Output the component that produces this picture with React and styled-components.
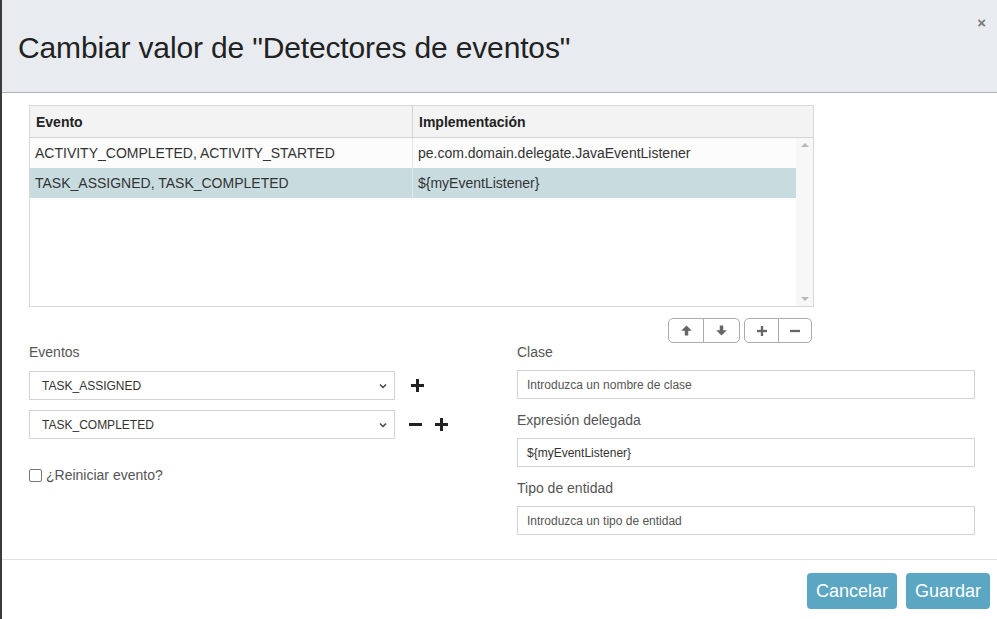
import React from "react";
import styled, { createGlobalStyle } from "styled-components";

const GlobalStyle = createGlobalStyle`
  html, body {
    margin: 0;
    padding: 0;
    background: #3b3b3b;
    font-family: "Liberation Sans", Arial, sans-serif;
  }
  * { box-sizing: border-box; }
`;

const Modal = styled.div`
  margin-left: 2px;
  height: 619px;
  background: #fff;
  display: flex;
  flex-direction: column;
  overflow: hidden;
`;

const Header = styled.div`
  height: 93px;
  background: #e8ecf0;
  border-bottom: 1px solid #a9b1bd;
  display: flex;
  align-items: center;
  justify-content: space-between;
  padding: 0 12px 0 16px;
  position: relative;
`;

const Title = styled.h1`
  margin: 0;
  font-weight: normal;
  font-size: 30px;
  color: #222;
  letter-spacing: -0.15px;
  padding-top: 4px;
`;

const Close = styled.span`
  position: absolute;
  right: 11px;
  top: 14px;
  font-size: 15px;
  font-weight: bold;
  color: #777;
`;

const Body = styled.div`
  padding: 12px 22px 0 27px;
  flex: 1;
`;

const Table = styled.div`
  width: 785px;
  border: 1px solid #d8d8d8;
  height: 202px;
  display: flex;
  flex-direction: column;
`;

const HeadRow = styled.div`
  display: grid;
  grid-template-columns: 382px 1fr;
  height: 32px;
  background: #f3f3f3;
  border-bottom: 1px solid #d4d4d4;
`;

const HeadCell = styled.div`
  font-weight: bold;
  font-size: 14px;
  color: #222;
  padding: 0 6px;
  display: flex;
  align-items: center;
  border-left: ${(p) => (p.$first ? "none" : "1px solid #d4d4d4")};
`;

const TableBody = styled.div`
  flex: 1;
  display: flex;
`;

const Rows = styled.div`
  flex: 1;
`;

const Row = styled.div`
  display: grid;
  grid-template-columns: 382px 1fr;
  height: 30px;
  background: ${(p) => (p.$selected ? "#c8dce0" : "#fcfcfc")};
`;

const Cell = styled.div`
  font-size: 14px;
  color: #333;
  padding: 0 5px;
  display: flex;
  align-items: center;
  border-left: ${(p) => (p.$first ? "none" : "1px solid #e6e6e6")};
`;

const Scrollbar = styled.div`
  width: 17px;
  background: #f7f7f7;
  display: flex;
  flex-direction: column;
  justify-content: space-between;
  align-items: center;
  padding: 5px 0;
`;

const Arrow = styled.div`
  width: 0;
  height: 0;
  border-left: 4px solid transparent;
  border-right: 4px solid transparent;
  ${(p) =>
    p.$down
      ? "border-top: 4px solid #b8b8b8;"
      : "border-bottom: 4px solid #b8b8b8;"}
`;

const Toolbar = styled.div`
  width: 785px;
  display: flex;
  justify-content: flex-end;
  gap: 4px;
  margin-top: 11px;
  padding-right: 2px;
`;

const BtnGroup = styled.div`
  display: flex;
`;

const IconBtn = styled.button`
  width: ${(p) => p.$w || 35}px;
  height: 25px;
  background: #fff;
  border: 1px solid #aaa;
  border-radius: ${(p) => (p.$pos === "left" ? "5px 0 0 5px" : "0 5px 5px 0")};
  margin-left: ${(p) => (p.$pos === "right" ? "-1px" : "0")};
  display: flex;
  align-items: center;
  justify-content: center;
  padding: 0;
  color: #666;
`;

const Columns = styled.div`
  display: grid;
  grid-template-columns: 488px 458px;
  margin-top: 1px;
`;

const Col = styled.div`
  display: flex;
  flex-direction: column;
`;

const Label = styled.div`
  font-size: 14px;
  color: #555;
  height: 17px;
`;

const SelectRow = styled.div`
  display: flex;
  align-items: center;
  margin-top: ${(p) => p.$mt}px;
`;

const Select = styled.div`
  width: 366px;
  height: 29px;
  border: 1px solid #d3d3d3;
  display: flex;
  align-items: center;
  justify-content: space-between;
  padding: 0 6px 0 12px;
  font-size: 12px;
  color: #333;
`;

const Actions = styled.div`
  display: flex;
  gap: 13px;
  margin-left: ${(p) => p.$ml}px;
`;

const CheckRow = styled.label`
  display: flex;
  align-items: center;
  gap: 4px;
  font-size: 14px;
  color: #555;
  margin-top: 28px;
`;

const Box = styled.span`
  width: 13px;
  height: 13px;
  border: 1px solid #767676;
  border-radius: 2px;
  display: inline-block;
`;

const Input = styled.div`
  width: 458px;
  height: 29px;
  border: 1px solid #d3d3d3;
  display: flex;
  align-items: center;
  padding: 0 9px;
  font-size: 12px;
  color: ${(p) => (p.$value ? "#333" : "#555")};
  margin-top: 9px;
  margin-bottom: ${(p) => p.$mb || 0}px;
`;

const Footer = styled.div`
  height: 60px;
  border-top: 1px solid #e2e2e2;
  display: flex;
  justify-content: flex-end;
  align-items: flex-start;
  gap: 9px;
  padding: 13px 7px 0 0;
`;

const Button = styled.button`
  height: 36px;
  padding: 0 9px;
  background: #5aa6c3;
  color: #fff;
  border: none;
  border-radius: 4px;
  font-size: 18px;
  font-family: "Liberation Sans", Arial, sans-serif;
`;

const Chevron = () => (
  <svg width="10" height="10" viewBox="0 0 10 10">
    <path d="M2 3.5 L5 6.5 L8 3.5" stroke="#444" strokeWidth="1.5" fill="none" />
  </svg>
);

const Plus = ({ size = 13, color = "#222", w = 3 }) => (
  <svg width={size} height={size} viewBox="0 0 13 13">
    <rect x="0" y={(13 - w) / 2} width="13" height={w} fill={color} />
    <rect x={(13 - w) / 2} y="0" width={w} height="13" fill={color} />
  </svg>
);

const Minus = ({ size = 13, color = "#222", w = 3 }) => (
  <svg width={size} height={size} viewBox="0 0 13 13">
    <rect x="0" y={(13 - w) / 2} width="13" height={w} fill={color} />
  </svg>
);

const ArrowIcon = ({ down }) => (
  <svg width="11" height="11" viewBox="0 0 10 10">
    <g transform={down ? "rotate(180 5 5)" : undefined}>
      <path d="M5 0.5 L9.8 5.3 L6.6 5.3 L6.6 9.5 L3.4 9.5 L3.4 5.3 L0.2 5.3 Z" fill="#666" />
    </g>
  </svg>
);

const rows = [
  ["ACTIVITY_COMPLETED, ACTIVITY_STARTED", "pe.com.domain.delegate.JavaEventListener"],
  ["TASK_ASSIGNED, TASK_COMPLETED", "${myEventListener}"],
];

const App = () => {
  return (
    <>
      <GlobalStyle />
      <Modal>
        <Header>
          <Title>Cambiar valor de "Detectores de eventos"</Title>
          <Close>×</Close>
        </Header>
        <Body>
          <Table>
            <HeadRow>
              <HeadCell $first>Evento</HeadCell>
              <HeadCell>Implementación</HeadCell>
            </HeadRow>
            <TableBody>
              <Rows>
                {rows.map((r, i) => (
                  <Row key={i} $selected={i === 1}>
                    <Cell $first>{r[0]}</Cell>
                    <Cell>{r[1]}</Cell>
                  </Row>
                ))}
              </Rows>
              <Scrollbar>
                <Arrow />
                <Arrow $down />
              </Scrollbar>
            </TableBody>
          </Table>
          <Toolbar>
            <BtnGroup>
              <IconBtn $pos="left" $w={36}>
                <ArrowIcon />
              </IconBtn>
              <IconBtn $pos="right" $w={37}>
                <ArrowIcon down />
              </IconBtn>
            </BtnGroup>
            <BtnGroup>
              <IconBtn $pos="left" $w={35}>
                <Plus size={10} color="#666" />
              </IconBtn>
              <IconBtn $pos="right" $w={34}>
                <Minus size={10} color="#666" />
              </IconBtn>
            </BtnGroup>
          </Toolbar>
          <Columns>
            <Col>
              <Label>Eventos</Label>
              <SelectRow $mt={10}>
                <Select>
                  TASK_ASSIGNED
                  <Chevron />
                </Select>
                <Actions $ml={16}>
                  <Plus />
                </Actions>
              </SelectRow>
              <SelectRow $mt={10}>
                <Select>
                  TASK_COMPLETED
                  <Chevron />
                </Select>
                <Actions $ml={14}>
                  <Minus />
                  <Plus />
                </Actions>
              </SelectRow>
              <CheckRow>
                <Box />
                ¿Reiniciar evento?
              </CheckRow>
            </Col>
            <Col>
              <Label>Clase</Label>
              <Input $mb={13}>Introduzca un nombre de clase</Input>
              <Label>Expresión delegada</Label>
              <Input $value $mb={13}>${"{myEventListener}"}</Input>
              <Label>Tipo de entidad</Label>
              <Input>Introduzca un tipo de entidad</Input>
            </Col>
          </Columns>
        </Body>
        <Footer>
          <Button>Cancelar</Button>
          <Button>Guardar</Button>
        </Footer>
      </Modal>
    </>
  );
};

export default App;
